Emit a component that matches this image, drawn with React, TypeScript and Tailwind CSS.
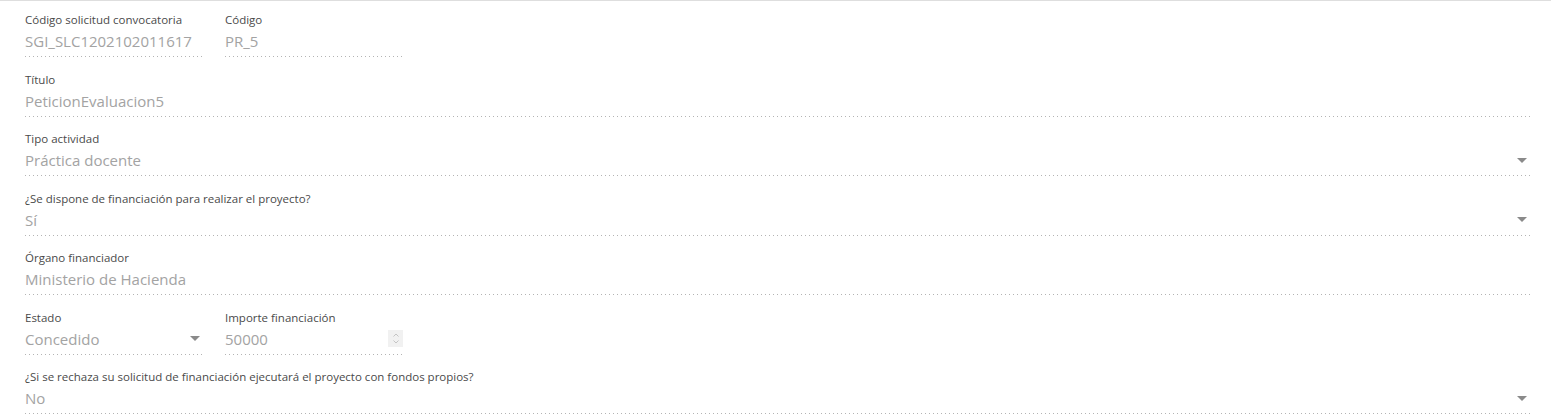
import React from "react";

type FieldProps = {
  label: string;
  value: string;
  select?: boolean;
  number?: boolean;
  className?: string;
};

function Caret() {
  return (
    <span className="ml-2 h-0 w-0 border-x-[5px] border-t-[5px] border-x-transparent border-t-[#8a8a8a]" />
  );
}

function Spinner() {
  return (
    <span className="flex h-[17px] w-[15px] flex-col items-center justify-center bg-[#f1f1f1]">
      <svg width="8" height="13" viewBox="0 0 8 13" fill="none" stroke="#c4c4c4" strokeWidth="1">
        <path d="M1.5 4.5 L4 2 L6.5 4.5" />
        <path d="M1.5 8.5 L4 11 L6.5 8.5" />
      </svg>
    </span>
  );
}

function Field({ label, value, select, number, className = "" }: FieldProps) {
  return (
    <div className={`flex h-[59.5px] flex-col ${className}`}>
      <div className="h-[14px] text-[11.5px] leading-[14px] text-[#4a4a4a] whitespace-nowrap">{label}</div>
      <div className="mt-[4px] flex h-[20px] items-center justify-between">
        <span className="text-[15px] leading-[20px] text-[#a3a3a3] whitespace-nowrap">{value}</span>
        {select && <span className="mr-[3px] flex items-center"><Caret /></span>}
        {number && <Spinner />}
      </div>
      <div className="mt-[5px] h-px w-full bg-[linear-gradient(to_right,rgba(0,0,0,0.42)_0%,rgba(0,0,0,0.42)_33%,transparent_0%)] bg-[length:4px_1px] bg-repeat-x opacity-70" />
    </div>
  );
}

export default function App() {
  return (
    <div className="h-[417px] w-full overflow-hidden border-t border-[#dedede] bg-white font-['Open_Sans',sans-serif]">
      <div className="pl-[25px] pr-[21px] pt-[12px]">
        <div className="flex gap-[22px]">
          <Field className="w-[178px]" label="Código solicitud convocatoria" value="SGI_SLC1202102011617" />
          <Field className="w-[178px]" label="Código" value="PR_5" />
        </div>
        <Field label="Título" value="PeticionEvaluacion5" />
        <Field label="Tipo actividad" value="Práctica docente" select />
        <Field label="¿Se dispone de financiación para realizar el proyecto?" value="Sí" select />
        <Field label="Órgano financiador" value="Ministerio de Hacienda" />
        <div className="flex gap-[22px]">
          <Field className="w-[178px]" label="Estado" value="Concedido" select />
          <Field className="w-[178px]" label="Importe financiación" value="50000" number />
        </div>
        <Field
          label="¿Si se rechaza su solicitud de financiación ejecutará el proyecto con fondos propios?"
          value="No"
          select
        />
      </div>
    </div>
  );
}
